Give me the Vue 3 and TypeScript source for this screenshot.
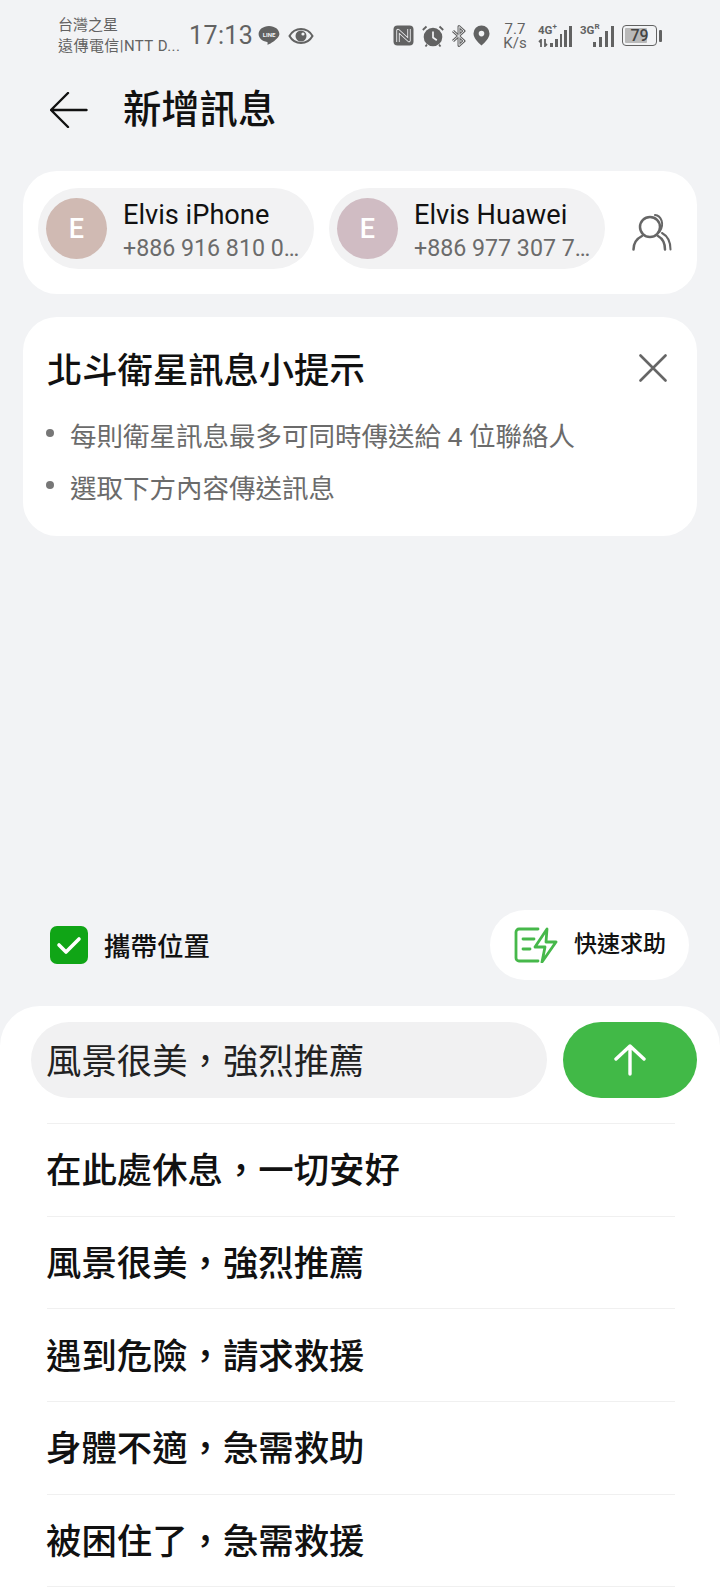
<script setup lang="ts">
interface Chip { name: string; phone: string; color: string }
const chips: Chip[] = [
  { name: 'Elvis iPhone', phone: '+886 916 810 0…', color: '#d0bab3' },
  { name: 'Elvis Huawei', phone: '+886 977 307 7…', color: '#d0bcc3' },
]
const tips: string[] = ['每則衛星訊息最多可同時傳送給 4 位聯絡人', '選取下方內容傳送訊息']
const rows: string[] = ['在此處休息，一切安好', '風景很美，強烈推薦', '遇到危險，請求救援', '身體不適，急需救助', '被困住了，急需救援']
</script>

<template>
  <div class="page">
    <header class="status">
      <div class="carrier">
        <div>台灣之星</div>
        <div class="carrier-2">遠傳電信|NTT D...</div>
      </div>
      <span class="time">17:13</span>
      <svg class="line" width="22" height="21" viewBox="0 0 22 21">
        <path d="M11 1C5.2 1 .6 4.6.6 9.1c0 4 3.6 7.3 8.5 8 .6.1.6.6.5 1.1l-.1 1c-.1.5.3.7.8.4 2.5-1.4 7.4-4.4 9.6-7.2 1-1.1 1.5-2.500 1.5-3.300C21.400 4.600 16.800 1 11 1z" fill="#626262"/>
        <text x="11" y="11.500" class="line-t" text-anchor="middle">LINE</text>
      </svg>
      <svg class="eye" width="26" height="18" viewBox="0 0 26 18">
        <path d="M1.500 9C4 4.500 8.200 2 13 2s9 2.500 11.500 7C22 13.500 17.800 16 13 16S4 13.500 1.500 9z" fill="none" stroke="#626262" stroke-width="2"/>
        <circle cx="13" cy="9" r="5.500" fill="#626262"/>
        <circle cx="15" cy="7" r="1.600" fill="#f2f3f5"/>
      </svg>
      <div class="grow"></div>
      <svg class="nfc" width="21" height="21" viewBox="0 0 21 21">
        <rect width="20" height="20" x=".5" y=".5" rx="4" fill="#626262"/>
        <path d="M5 17V5.500l11 10V4" fill="none" stroke="#f2f3f5" stroke-width="3.400" stroke-linejoin="round"/>
        <path d="M5 17V5.500l11 10V4" fill="none" stroke="#626262" stroke-width="1.700" stroke-linejoin="round"/>
      </svg>
      <svg class="alarm" width="22" height="22" viewBox="0 0 22 22">
        <circle cx="11" cy="12" r="9.300" fill="#626262"/>
        <path d="M11 6.500v6l3.800 2.700" fill="none" stroke="#f2f3f5" stroke-width="1.700"/>
        <path d="M.8 5 4.500 1.500M21.200 5 17.500 1.500M5 19.500l-1.500 2M17 19.500l1.500 2" stroke="#626262" stroke-width="1.800" fill="none"/>
      </svg>
      <svg class="bt" width="16" height="22" viewBox="0 0 16 22">
        <path d="M2 6l11 10-5 4.500V1.500l5 4.500L2 16" fill="none" stroke="#626262" stroke-width="3" stroke-linejoin="round"/>
        <path d="M2 6l11 10-5 4.500V1.500l5 4.500L2 16" fill="none" stroke="#f2f3f5" stroke-width=".9"/>
      </svg>
      <svg class="pin" width="17" height="21" viewBox="0 0 17 21">
        <path fill-rule="evenodd" d="M8.500.5a8 8 0 0 1 8 8c0 4.500-4.500 9-8 12-3.500-3-8-7.500-8-12a8 8 0 0 1 8-8zm0 5.300a2.800 2.800 0 1 0 0 5.600 2.800 2.800 0 0 0 0-5.600z" fill="#626262"/>
      </svg>
      <div class="speed">7.7<br />K/s</div>
      <div class="signal s1">
        <span class="net">4G<sup>+</sup></span>
        <svg class="updown" width="13" height="8" viewBox="0 0 13 8">
          <path d="M3 8V1L1 3M7 0v7l2-2" fill="none" stroke="#626262" stroke-width="1.800"/>
        </svg>
        <div class="bars"><i style="height:4px"></i><i style="height:8px"></i><i style="height:13px"></i><i style="height:17px"></i><i style="height:21px"></i></div>
      </div>
      <div class="signal s2">
        <span class="net">3G<sup>R</sup></span>
        <div class="bars"><i style="height:5px"></i><i style="height:10px"></i><i style="height:16px"></i><i style="height:21px"></i></div>
      </div>
      <div class="battery">
        <div class="cell"><div class="fill"></div><span>79</span></div>
        <div class="nub"></div>
      </div>
    </header>

    <div class="title-bar">
      <svg width="40" height="36" viewBox="0 0 40 36">
        <path d="M36.500 18H1M18 1 1 18l17 17" fill="none" stroke="#111" stroke-width="2.400" stroke-linecap="round" stroke-linejoin="round"/>
      </svg>
      <h1>新增訊息</h1>
    </div>

    <section class="card recipients">
      <div v-for="c in chips" :key="c.name" class="chip">
        <div class="avatar" :style="{ background: c.color }">E</div>
        <div class="chip-text">
          <div class="name">{{ c.name }}</div>
          <div class="phone">{{ c.phone }}</div>
        </div>
      </div>
      <svg class="people" width="40" height="38" viewBox="0 0 40 38">
        <circle cx="18" cy="14" r="10" fill="none" stroke="#666" stroke-width="2.500"/>
        <path d="M1.500 36.500c0-6 3.500-11 8.500-13.500M26 23c4.500 2.500 7 7.500 7 13.500" fill="none" stroke="#666" stroke-width="2.500" stroke-linecap="round"/>
        <path d="M23 2c6 .5 10 9 4.500 17M30 20c5.500 3 8.500 9 8.500 16.500" fill="none" stroke="#666" stroke-width="2" stroke-linecap="round"/>
      </svg>
    </section>

    <section class="card tips">
      <div class="tips-head">
        <h2>北斗衛星訊息小提示</h2>
        <svg width="28" height="28" viewBox="0 0 28 28">
          <path d="M1.500 1.500l25 25M26.500 1.500l-25 25" stroke="#666" stroke-width="2.600" stroke-linecap="round"/>
        </svg>
      </div>
      <ul>
        <li v-for="t in tips" :key="t">{{ t }}</li>
      </ul>
    </section>

    <div class="spacer"></div>

    <div class="actions">
      <div class="check">
        <div class="box">
          <svg width="26" height="20" viewBox="0 0 26 20">
            <path d="M3 10l7 7L23 4" fill="none" stroke="#fff" stroke-width="3.600" stroke-linecap="round" stroke-linejoin="round"/>
          </svg>
        </div>
        <span class="check-label">攜帶位置</span>
      </div>
      <div class="quick">
        <svg width="44" height="36" viewBox="0 0 44 36">
          <path d="M24 2H5a3 3 0 0 0-3 3v26a3 3 0 0 0 3 3h19M9 12h11M9 22h7" fill="none" stroke="#46b84a" stroke-width="2.800" stroke-linecap="round"/>
          <path d="M33 2 21 20h10l-3 15 14-20H32z" fill="none" stroke="#46b84a" stroke-width="2.800" stroke-linejoin="round"/>
        </svg>
        <span class="quick-label">快速求助</span>
      </div>
    </div>

    <section class="sheet">
      <div class="compose">
        <div class="input">風景很美，強烈推薦</div>
        <div class="send">
          <svg width="34" height="32" viewBox="0 0 34 32">
            <path d="M17 30V2M3 15 17 2l14 13" fill="none" stroke="#fff" stroke-width="3.400" stroke-linecap="round" stroke-linejoin="round"/>
          </svg>
        </div>
      </div>
      <div class="list">
        <div v-for="r in rows" :key="r" class="row">{{ r }}</div>
      </div>
    </section>
  </div>
</template>

<style>
html, body { margin: 0; background: #f2f3f5; }
</style>

<style scoped>
.page {
  width: 720px;
  height: 1593px;
  overflow: hidden;
  display: flex;
  flex-direction: column;
  background: #f2f3f5;
  font-family: Roboto, "Noto Sans CJK TC", sans-serif;
  color: #111;
}
.status {
  height: 70px;
  box-sizing: border-box;
  padding: 1px 58px 0 58px;
  display: flex;
  align-items: center;
  flex: none;
  color: #626262;
}
.carrier { width: 131px; font-size: 15px; line-height: 20.500px; white-space: nowrap; }
.carrier-2 { letter-spacing: .45px; }
.time { font-size: 25px; letter-spacing: .4px; width: 70px; }
.line { margin-left: -1px; }
.eye { margin-left: 8px; }
.grow { flex: 1; }
.nfc { margin-right: 8px; }
.alarm { margin-right: 7px; }
.bt { margin-right: 6px; }
.pin { margin-right: 13px; }
.speed { width: 24px; text-align: center; font-size: 15px; line-height: 14px; margin-right: 11px; white-space: nowrap; }
.signal { position: relative; display: flex; justify-content: flex-end; align-items: flex-end; height: 22px; }
.s1 { width: 34px; margin-right: 8px; }
.s2 { width: 34px; margin-right: 8px; }
.net { position: absolute; left: 0; top: 0; font-size: 11.500px; font-weight: 700; line-height: 11px; white-space: nowrap; }
.net sup { font-size: 8px; line-height: 0; }
.updown { position: absolute; left: 0; bottom: 0; }
.bars { display: flex; align-items: flex-end; gap: 3px; }
.bars i { display: block; width: 3px; background: #626262; }
.s1 .bars { gap: 2px; }
.s1 .bars i { width: 2.800px; }
.battery { display: flex; align-items: center; }
.cell { position: relative; width: 35px; height: 21px; box-sizing: border-box; border: 1.800px solid #626262; border-radius: 4px; display: flex; align-items: center; justify-content: center; font-size: 16px; font-weight: 500; color: #444; }
.fill { position: absolute; left: 2px; top: 2px; bottom: 2px; width: 22px; background: #b9b9b9; border-radius: 1px; }
.cell span { position: relative; }
.nub { width: 3px; height: 12px; background: #626262; margin-left: 2px; border-radius: 1px; }
.line-t { font: 700 6px Roboto, sans-serif; fill: #f2f3f5; }

.title-bar { display: flex; align-items: center; height: 76px; box-sizing: border-box; padding: 4px 0 0 50px; gap: 33px; flex: none; }
.title-bar h1 { margin: 0; font-size: 38.300px; font-weight: 500; line-height: 1; }

.card { background: #fff; margin: 0 23px; border-radius: 34px; flex: none; }
.recipients { margin-top: 25px; height: 123px; box-sizing: border-box; padding: 17px 15px; display: flex; align-items: flex-start; gap: 15px; }
.chip { width: 276px; height: 81px; box-sizing: border-box; border-radius: 41px; background: #f2f2f3; padding: 0 8px; display: flex; align-items: center; gap: 16px; flex: none; }
.avatar { width: 61px; height: 61px; border-radius: 50%; color: #fff; font-size: 27px; font-weight: 500; display: flex; align-items: center; justify-content: center; flex: none; }
.chip-text { white-space: nowrap; padding-top: 4px; }
.name { font-size: 27.200px; line-height: 32px; color: #111; }
.phone { font-size: 23.200px; line-height: 30px; color: #6b6b6b; margin-top: 2px; }
.people { margin: 25px 0 0 12px; flex: none; }

.tips { margin-top: 23px; height: 219px; box-sizing: border-box; padding: 31px 30px 0 24px; }
.tips-head { display: flex; justify-content: space-between; align-items: center; height: 48px; }
.tips-head h2 { margin: 0; font-size: 35.300px; font-weight: 500; line-height: 1; }
.tips-head svg { margin-top: -8px; }
.tips ul { list-style: none; margin: 15px 0 0; padding: 0; }
.tips li { position: relative; padding-left: 23px; font-size: 26.500px; line-height: 52px; color: #6b6b6b; white-space: nowrap; }
.tips li::before { content: ""; position: absolute; left: -1px; top: 18px; width: 8px; height: 8px; border-radius: 50%; background: #777; }

.spacer { flex: 1; }

.actions { display: flex; justify-content: space-between; align-items: center; padding: 0 31px 0 50px; flex: none; margin-bottom: 26px; }
.check { display: flex; align-items: center; gap: 16px; font-size: 26.500px; font-weight: 500; }
.check-label { margin-bottom: 2px; }
.box { width: 38px; height: 38px; border-radius: 7px; background: #10a516; display: flex; align-items: center; justify-content: center; }
.quick { width: 199px; height: 70px; box-sizing: border-box; border-radius: 35px; background: #fff; display: flex; align-items: center; padding-left: 24px; gap: 16px; font-size: 23px; font-weight: 500; }
.quick svg { flex: none; }
.quick-label { margin-bottom: 7px; }

.sheet { background: #fff; height: 587px; border-radius: 40px 40px 0 0; padding: 16px 23px 0 31px; box-sizing: border-box; flex: none; }
.compose { display: flex; gap: 16px; height: 76px; }
.input { width: 516px; border-radius: 38px; background: #f1f1f2; box-sizing: border-box; padding: 0 0 4px 15px; display: flex; align-items: center; font-size: 35.400px; color: #222; white-space: nowrap; }
.send { width: 134px; border-radius: 38px; background: #41b947; display: flex; align-items: center; justify-content: center; }
.list { margin: 25px 22px 0 16px; border-bottom: 1px solid #f0f0f0; }
.row { height: 92.700px; box-sizing: border-box; border-top: 1px solid #f0f0f0; padding-bottom: 4px; display: flex; align-items: center; font-size: 35.400px; font-weight: 500; color: #111; text-indent: -1px; white-space: nowrap; }
</style>
